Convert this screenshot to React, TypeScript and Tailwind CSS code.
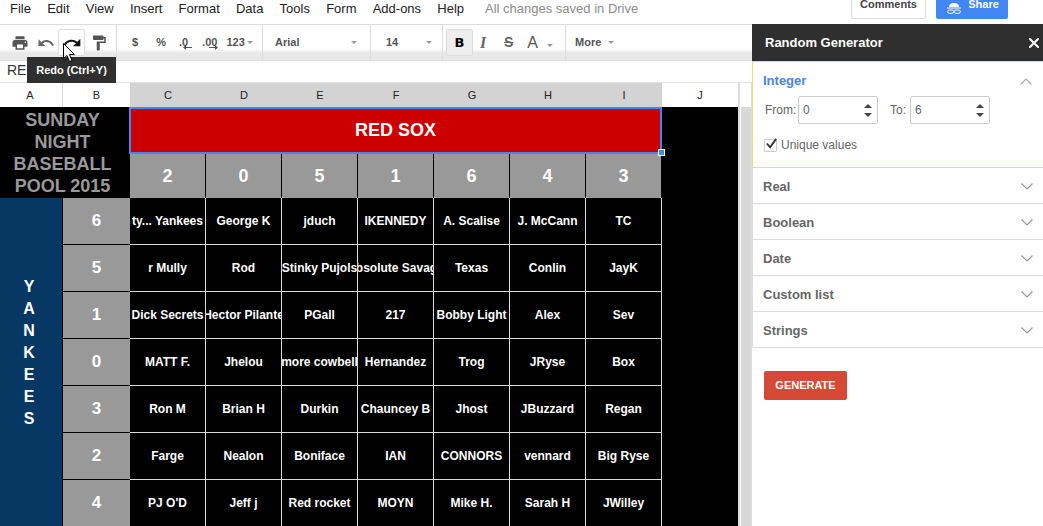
const menus = ["File", "Edit", "View", "Insert", "Format", "Data", "Tools", "Form", "Add-ons", "Help"];
const cols = ["C", "D", "E", "F", "G", "H", "I"];
const topNums = [2, 0, 5, 1, 6, 4, 3];
const rows: [number, string[]][] = [
  [6, ["ty... Yankees", "George K", "jduch", "IKENNEDY", "A. Scalise", "J. McCann", "TC"]],
  [5, ["r Mully", "Rod", "Stinky Pujols", "Absolute Savage", "Texas", "Conlin", "JayK"]],
  [1, ["Dick Secrets", "Hector Pilante", "PGall", "217", "Bobby Light", "Alex", "Sev"]],
  [0, ["MATT F.", "Jhelou", "more cowbell", "Hernandez", "Trog", "JRyse", "Box"]],
  [3, ["Ron M", "Brian H", "Durkin", "Chauncey B", "Jhost", "JBuzzard", "Regan"]],
  [2, ["Farge", "Nealon", "Boniface", "IAN", "CONNORS", "vennard", "Big Ryse"]],
  [4, ["PJ O'D", "Jeff j", "Red rocket", "MOYN", "Mike H.", "Sarah H", "JWilley"]],
];
const sections = ["Real", "Boolean", "Date", "Custom list", "Strings"];

function Caret({ className = "" }: { className?: string }) {
  return <span className={`inline-block w-0 h-0 border-x-[3px] border-x-transparent border-t-[3px] border-t-[#999] ${className}`} />;
}

function Icon({ d, className = "", fill = "#555" }: { d: string; className?: string; fill?: string }) {
  return (
    <svg viewBox="0 0 24 24" className={className} fill={fill}>
      <path d={d} />
    </svg>
  );
}

function Chevron({ up = false }: { up?: boolean }) {
  return (
    <svg viewBox="0 0 12 7" className="w-3 h-[7px]" fill="none" stroke={up ? "#aaa" : "#999"} strokeWidth="1.2">
      <path d={up ? "M.5 6.5 6 1l5.5 5.5" : "M.5.5 6 6 11.5.5"} />
    </svg>
  );
}

function Spinner() {
  return (
    <div className="flex flex-col gap-[5px] items-center">
      <span className="w-0 h-0 border-x-[4px] border-x-transparent border-b-[4px] border-b-[#444]" />
      <span className="w-0 h-0 border-x-[4px] border-x-transparent border-t-[4px] border-t-[#444]" />
    </div>
  );
}

function NumInput({ value }: { value: string }) {
  return (
    <div className="w-[80px] h-[28px] border border-[#ccc] rounded-[2px] flex items-center pl-[4px] pr-[5px] justify-between text-[12px] text-[#666]">
      <span>{value}</span>
      <Spinner />
    </div>
  );
}

export default function App() {
  return (
    <div className="relative w-[1043px] h-[526px] overflow-hidden bg-white font-['Liberation_Sans',Arial,sans-serif] text-[13px]">
      {/* Menu */}
      <div className="h-6 flex items-start overflow-hidden pl-[10px]">
        <div className="flex gap-[16.2px] pt-[1px] text-[#222] leading-[15px]">
          {menus.map((m) => (
            <span key={m}>{m}</span>
          ))}
        </div>
        <span className="ml-[21px] pt-[1px] leading-[15px] text-[#8c8c8c]">All changes saved in Drive</span>
        <div className="ml-auto mr-[35px] flex gap-[10px] -mt-[11px]">
          <div className="w-[75px] h-[30px] border border-[#ddd] rounded-[2px] flex items-center justify-center text-[11px] font-bold text-[#444]">
            Comments
          </div>
          <div className="w-[72px] h-[30px] bg-[#4285f4] rounded-[2px] flex items-center justify-center gap-[7px] text-[11px] font-bold text-white pl-[2px]">
            <svg viewBox="0 0 14 12" className="w-[14px] h-[12px] mt-[8px]" fill="none">
              <path d="M2 5C2 2 4.500 1 7 1s5 1 5 4z" fill="#fff" />
              <path d="M0 6h14" stroke="#fff" />
              <rect x=".7" y="8" width="6" height="3.300" rx="1.600" stroke="#fff" />
              <rect x="7.300" y="8" width="6" height="3.300" rx="1.600" stroke="#fff" />
            </svg>
            Share
          </div>
        </div>
      </div>

      <div className="flex h-[502px]">
        {/* Left */}
        <div className="w-[752px] flex flex-col">
          {/* Toolbar */}
          <div className="h-[37px] border-y border-[#ddd] flex text-[#666] font-bold text-[11px] bg-[linear-gradient(to_bottom,#fff_25px,#f3f3f3_25px,#f3f3f3_27px,#e8e8e8_27px)]">
            <div className="w-[117px] border-r border-[#ddd] flex items-center pl-[11px]">
              <Icon className="w-[18px] h-[18px]" fill="#555" d="M19 8H5c-1.660 0-3 1.340-3 3v6h4v4h12v-4h4v-6c0-1.660-1.340-3-3-3zm-3 11H8v-5h8v5zm3-7c-.55 0-1-.45-1-1s.45-1 1-1 1 .45 1 1-.45 1-1 1zm-1-9H6v4h12V3z" />
              <Icon className="w-[18px] h-[18px] ml-[8px]" fill="#666" d="M12.500 8c-2.650 0-5.050.99-6.900 2.600L2 7v9h9l-3.620-3.620c1.390-1.160 3.160-1.880 5.120-1.880 3.540 0 6.550 2.310 7.600 5.500l2.370-.78C21.080 11.030 17.150 8 12.500 8z" />
              <div className="w-[27px] h-[27px] ml-[3px] border border-[#ddd] rounded-[2px] flex items-center justify-center bg-white">
                <Icon className="w-[20px] h-[20px]" fill="#111" d="M18.400 10.600C16.550 8.990 14.150 8 11.500 8c-4.650 0-8.580 3.030-9.960 7.220L3.900 16c1.050-3.190 4.050-5.500 7.600-5.500 1.950 0 3.730.72 5.120 1.880L13 16h9V7l-3.600 3.600z" />
              </div>
              <Icon className="w-[18px] h-[18px] ml-[5px]" fill="#555" d="M18 4V3c0-.55-.45-1-1-1H5c-.55 0-1 .45-1 1v4c0 .55.45 1 1 1h12c.55 0 1-.45 1-1V6h1v4H9v11c0 .55.45 1 1 1h2c.55 0 1-.45 1-1v-9h8V4h-3z" />
            </div>
            <div className="w-[146px] border-r border-[#ddd] flex items-center pl-[15px] text-[#555]">
              <span>$</span>
              <span className="ml-[18px]">%</span>
              <span className="ml-[13px] relative">
                .0
                <svg viewBox="0 0 9 5" className="absolute left-[4px] top-[11px] w-[9px] h-[5px]" fill="#555">
                  <path d="M0 2.500 3 0v2h6v1H3v2z" />
                </svg>
              </span>
              <span className="ml-[14px] relative">
                .00
                <svg viewBox="0 0 9 5" className="absolute left-[7px] top-[11px] w-[9px] h-[5px]" fill="#555">
                  <path d="M9 2.500 6 0v2H0v1h6v2z" />
                </svg>
              </span>
              <span className="ml-[9px]">123</span>
              <Caret className="ml-[2px]" />
            </div>
            <div className="w-[108px] border-r border-[#ddd] flex items-center pl-[12px] text-[#555]">
              <span>Arial</span>
              <Caret className="ml-[52px]" />
            </div>
            <div className="w-[72px] border-r border-[#ddd] flex items-center pl-[15px] text-[#555]">
              <span>14</span>
              <Caret className="ml-[28px]" />
            </div>
            <div className="w-[123px] border-r border-[#ddd] flex items-center pl-[3px]">
              <div className="w-[27px] h-[27px] border border-[#ddd] rounded-[2px] bg-[#eee] flex items-center justify-center text-[13px] font-['DejaVu_Sans'] text-black">
                B
              </div>
              <span className="ml-[7px] w-[10px] text-[16px] font-bold italic font-['Liberation_Serif'] text-[#666]">I</span>
              <span className="ml-[14px] text-[14px] text-[#666] line-through font-bold">S</span>
              <span className="ml-[14px] text-[16px] font-normal text-[#555]">A</span>
              <Caret className="ml-[9px] mt-[5px]" />
            </div>
            <div className="flex items-center pl-[9px] text-[#555]">
              <span>More</span>
              <Caret className="ml-[7px]" />
            </div>
          </div>

          {/* Formula bar */}
          <div className="h-[22px] pl-[7px] pb-[2px] border-b border-[#e4e4e4] flex items-center text-[14px] text-[#333]">RE</div>

          {/* Sheet */}
          <div className="flex flex-1 min-h-0">
            <div className="w-[738px] flex flex-col">
              <div className="h-[24px] flex text-[11px] text-[#222] shrink-0">
                <div className="w-[63px] border-r border-[#ddd] flex items-center justify-center pr-[2px]">A</div>
                <div className="w-[67px] flex items-center justify-center">B</div>
                <div className="w-[532px] grid grid-cols-7 bg-[#d3d3d3]">
                  {cols.map((c) => (
                    <div key={c} className="flex items-center justify-center">
                      {c}
                    </div>
                  ))}
                </div>
                <div className="w-[76px] flex items-center justify-center">J</div>
              </div>
              <div className="relative flex-1 min-h-0 grid grid-cols-[63px_67px_repeat(7,76px)_76px] grid-rows-[47px_44px_repeat(7,47px)] bg-black text-white font-bold overflow-hidden">
                <div className="col-span-2 row-span-2 flex items-center justify-center text-center text-[18px] leading-[22px] text-[#999] pr-[5px]">
                  SUNDAY
                  <br />
                  NIGHT
                  <br />
                  BASEBALL
                  <br />
                  POOL 2015
                </div>
                <div className="col-span-7 bg-[#cc0000] border-2 border-[#4285f4] -ml-px flex items-center justify-center text-[18px]">
                  RED SOX
                </div>
                <div className="row-span-9 col-start-10 row-start-1" />
                {topNums.map((n, i) => (
                  <div key={i} className="col-start-auto bg-[#999] border-r border-black flex items-center justify-center text-[18px] last:border-r-0">
                    {n}
                  </div>
                ))}
                <div className="col-start-1 row-start-3 row-span-7 bg-[#073763] border-r border-black flex flex-col items-center pt-[78px] text-[16px] leading-[22px] pr-[4px]">
                  {"YANKEES".split("").map((l, i) => (
                    <span key={i}>{l}</span>
                  ))}
                </div>
                {rows.map(([n, names], r) => (
                  <div key={r} className="col-start-2 col-span-8 grid grid-cols-[67px_repeat(7,76px)]">
                    <div className="bg-[#999] border-b border-black flex items-center justify-center text-[17px]">{n}</div>
                    {names.map((name, i) => (
                      <div key={i} className="border-r border-b border-[#d9d9d9] flex items-center justify-center overflow-hidden whitespace-nowrap text-[12px]">
                        <span className="shrink-0">{name}</span>
                      </div>
                    ))}
                  </div>
                ))}
                <div className="absolute left-[658px] top-[42px] w-[7px] h-[7px] bg-[#4285f4] border border-white" />
              </div>
            </div>
            <div className="w-[2px] bg-[#ddd]" />
            <div className="flex-1 pt-[24px] border-r border-[#ddd]">
              <div className="h-full bg-[#d9d9d9] ml-px" />
            </div>
          </div>
        </div>

        {/* Panel */}
        <div className="flex-1 flex flex-col">
          <div className="h-[37px] bg-[#2f2f2f] text-white font-bold text-[13px] flex items-center justify-between pl-[13px] pr-[4px]">
            <span>Random Generator</span>
            <svg viewBox="0 0 10 10" className="w-[10px] h-[10px]" stroke="#fff" strokeWidth="2">
              <path d="M0 0l10 10M10 0 0 10" />
            </svg>
          </div>
          <div className="h-[107px] border border-r-0 border-[#ffd966] pl-[10px] pr-[10px] pt-[12px] shrink-0">
            <div className="flex items-center justify-between h-[14px] pr-[1px]">
              <span className="font-bold text-[#4285f4]">Integer</span>
              <Chevron up />
            </div>
            <div className="flex items-center mt-[8px] text-[12px] text-[#666]">
              <span className="ml-[2px] w-[33px]">From:</span>
              <NumInput value="0" />
              <span className="ml-[12px] w-[20px]">To:</span>
              <NumInput value="6" />
            </div>
            <div className="flex items-center mt-[12px] text-[12px] text-[#666]">
              <span className="relative w-[13px] h-[13px] ml-[1px] border border-[#ccc] rounded-[1px]">
                <svg viewBox="0 0 14 12" className="absolute -top-[3px] left-0 w-[13px] h-[13px]" fill="none" stroke="#333" strokeWidth="2">
                  <path d="M2 6l3.500 4L12 1" />
                </svg>
              </span>
              <span className="ml-[4px]">Unique values</span>
            </div>
          </div>
          {sections.map((s) => (
            <div key={s} className="h-[36px] shrink-0 border-l border-b border-[#ddd] flex items-center justify-between pl-[10px] pr-[10px] pt-[2px] font-bold text-[#666]">
              <span>{s}</span>
              <Chevron />
            </div>
          ))}
          <div className="flex-1 border-l border-white pl-[11px] pt-[23px]">
            <div className="w-[83px] h-[29px] bg-[#d64937] rounded-[2px] text-white font-bold text-[11px] flex items-center justify-center">GENERATE</div>
          </div>
        </div>
      </div>

      {/* Tooltip + cursor */}
      <div className="absolute left-[27px] top-[57px] w-[89px] h-[26px] bg-[#2f2f2f] text-white font-bold text-[11px] flex items-center justify-center">
        Redo (Ctrl+Y)
      </div>
      <svg viewBox="0 0 12 19" className="absolute left-[63px] top-[43px] w-[12px] h-[19px]">
        <path d="M.5.5v15l3.500-3 2.500 6 2.500-1-2.500-6h5z" fill="#fff" stroke="#000" />
      </svg>
    </div>
  );
}
